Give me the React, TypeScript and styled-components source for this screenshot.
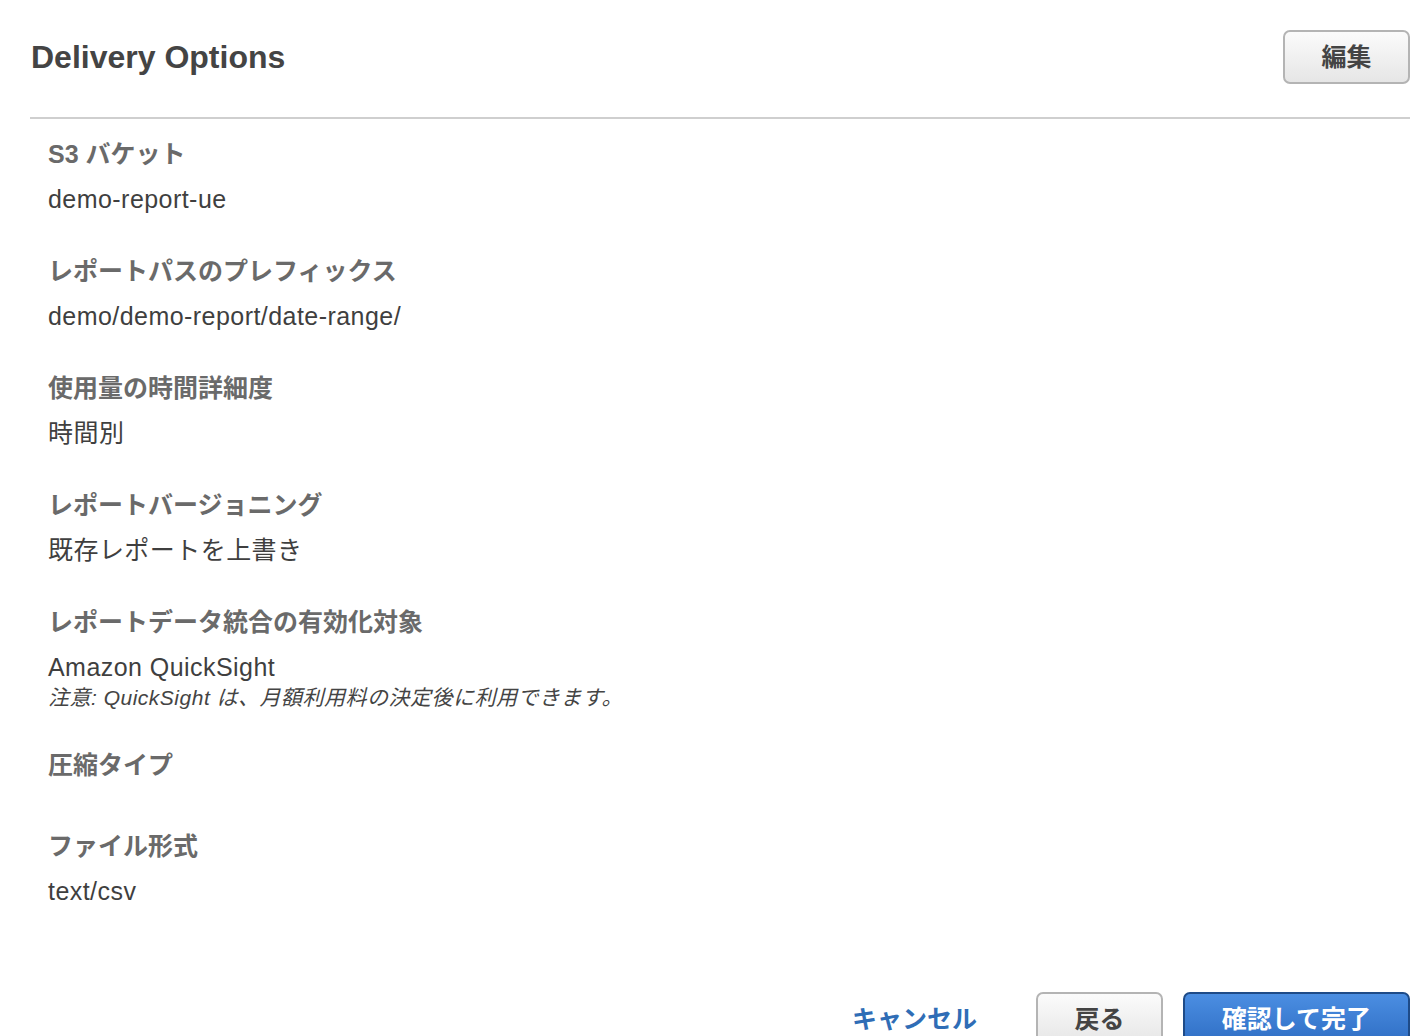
import React from "react";
import styled, { createGlobalStyle, css } from "styled-components";

const GlobalStyle = createGlobalStyle`
  html, body {
    margin: 0;
    padding: 0;
    background: #ffffff;
  }
  body {
    font-family: "Liberation Sans", "Noto Sans CJK JP", Arial, sans-serif;
    color: #444;
  }
`;

const Page = styled.div`
  padding: 0 18px 0 30px;
  overflow: hidden;
  height: 1036px;
  box-sizing: border-box;
`;

const Header = styled.header`
  display: flex;
  justify-content: space-between;
  align-items: center;
  padding: 30px 0 33px 1px;
  border-bottom: 2px solid #cfcfcf;
`;

const Title = styled.h1`
  margin: 0;
  font-size: 32px;
  line-height: 40px;
  font-weight: 700;
  color: #444;
`;

const buttonBase = css`
  box-sizing: border-box;
  height: 54px;
  border-radius: 7px;
  font-family: "Liberation Sans", "Noto Sans CJK JP", Arial, sans-serif;
  font-size: 25px;
  font-weight: 700;
  line-height: 1;
  cursor: pointer;
  display: inline-flex;
  align-items: center;
  justify-content: center;
`;

const Button = styled.button<{ $primary?: boolean; $width: number }>`
  ${buttonBase};
  width: ${(p) => p.$width}px;
  ${(p) =>
    p.$primary
      ? css`
          color: #ffffff;
          background: linear-gradient(#4b8ee2, #2f6ec4);
          border: 2px solid #1e4b88;
        `
      : css`
          color: #444;
          background: linear-gradient(#fbfbfb, #e6e6e6);
          border: 2px solid #b4b4b4;
        `}
`;

const Body = styled.div`
  display: flex;
  flex-direction: column;
  padding: 17px 0 0 18px;
`;

const Field = styled.section`
  display: flex;
  flex-direction: column;
  margin-bottom: 36px;
`;

const Label = styled.div`
  font-size: 25px;
  line-height: 36px;
  font-weight: 700;
  color: #6a6a6a;
  margin-bottom: 9px;
`;

const Value = styled.div`
  font-size: 25px;
  line-height: 36px;
  letter-spacing: 0.45px;
  color: #3f3f3f;
  &:empty {
    display: none;
  }
`;

const Note = styled.div`
  font-size: 21px;
  line-height: 26px;
  letter-spacing: 0.5px;
  font-style: italic;
  color: #444;
`;

const Footer = styled.footer`
  display: flex;
  justify-content: flex-end;
  align-items: center;
  margin-top: 47px;
`;

const CancelLink = styled.a`
  font-size: 25px;
  font-weight: 700;
  color: #2f6db6;
  text-decoration: none;
  margin-right: 59px;
  margin-bottom: 4px;
  cursor: pointer;
`;

const Spacer = styled.span`
  display: inline-block;
  width: 20px;
`;

type Item = { label: string; value?: string; note?: string };

const items: Item[] = [
  { label: "S3 バケット", value: "demo-report-ue" },
  { label: "レポートパスのプレフィックス", value: "demo/demo-report/date-range/" },
  { label: "使用量の時間詳細度", value: "時間別" },
  { label: "レポートバージョニング", value: "既存レポートを上書き" },
  {
    label: "レポートデータ統合の有効化対象",
    value: "Amazon QuickSight",
    note: "注意: QuickSight は、月額利用料の決定後に利用できます。",
  },
  { label: "圧縮タイプ", value: "" },
  { label: "ファイル形式", value: "text/csv" },
];

export default function App() {
  return (
    <>
      <GlobalStyle />
      <Page>
        <Header>
          <Title>Delivery Options</Title>
          <Button $width={127}>編集</Button>
        </Header>
        <Body>
          {items.map((it) => (
            <Field key={it.label}>
              <Label>{it.label}</Label>
              <Value>{it.value}</Value>
              {it.note && <Note>{it.note}</Note>}
            </Field>
          ))}
        </Body>
        <Footer>
          <CancelLink>キャンセル</CancelLink>
          <Button $width={127}>戻る</Button>
          <Spacer />
          <Button $primary $width={227}>確認して完了</Button>
        </Footer>
      </Page>
    </>
  );
}
